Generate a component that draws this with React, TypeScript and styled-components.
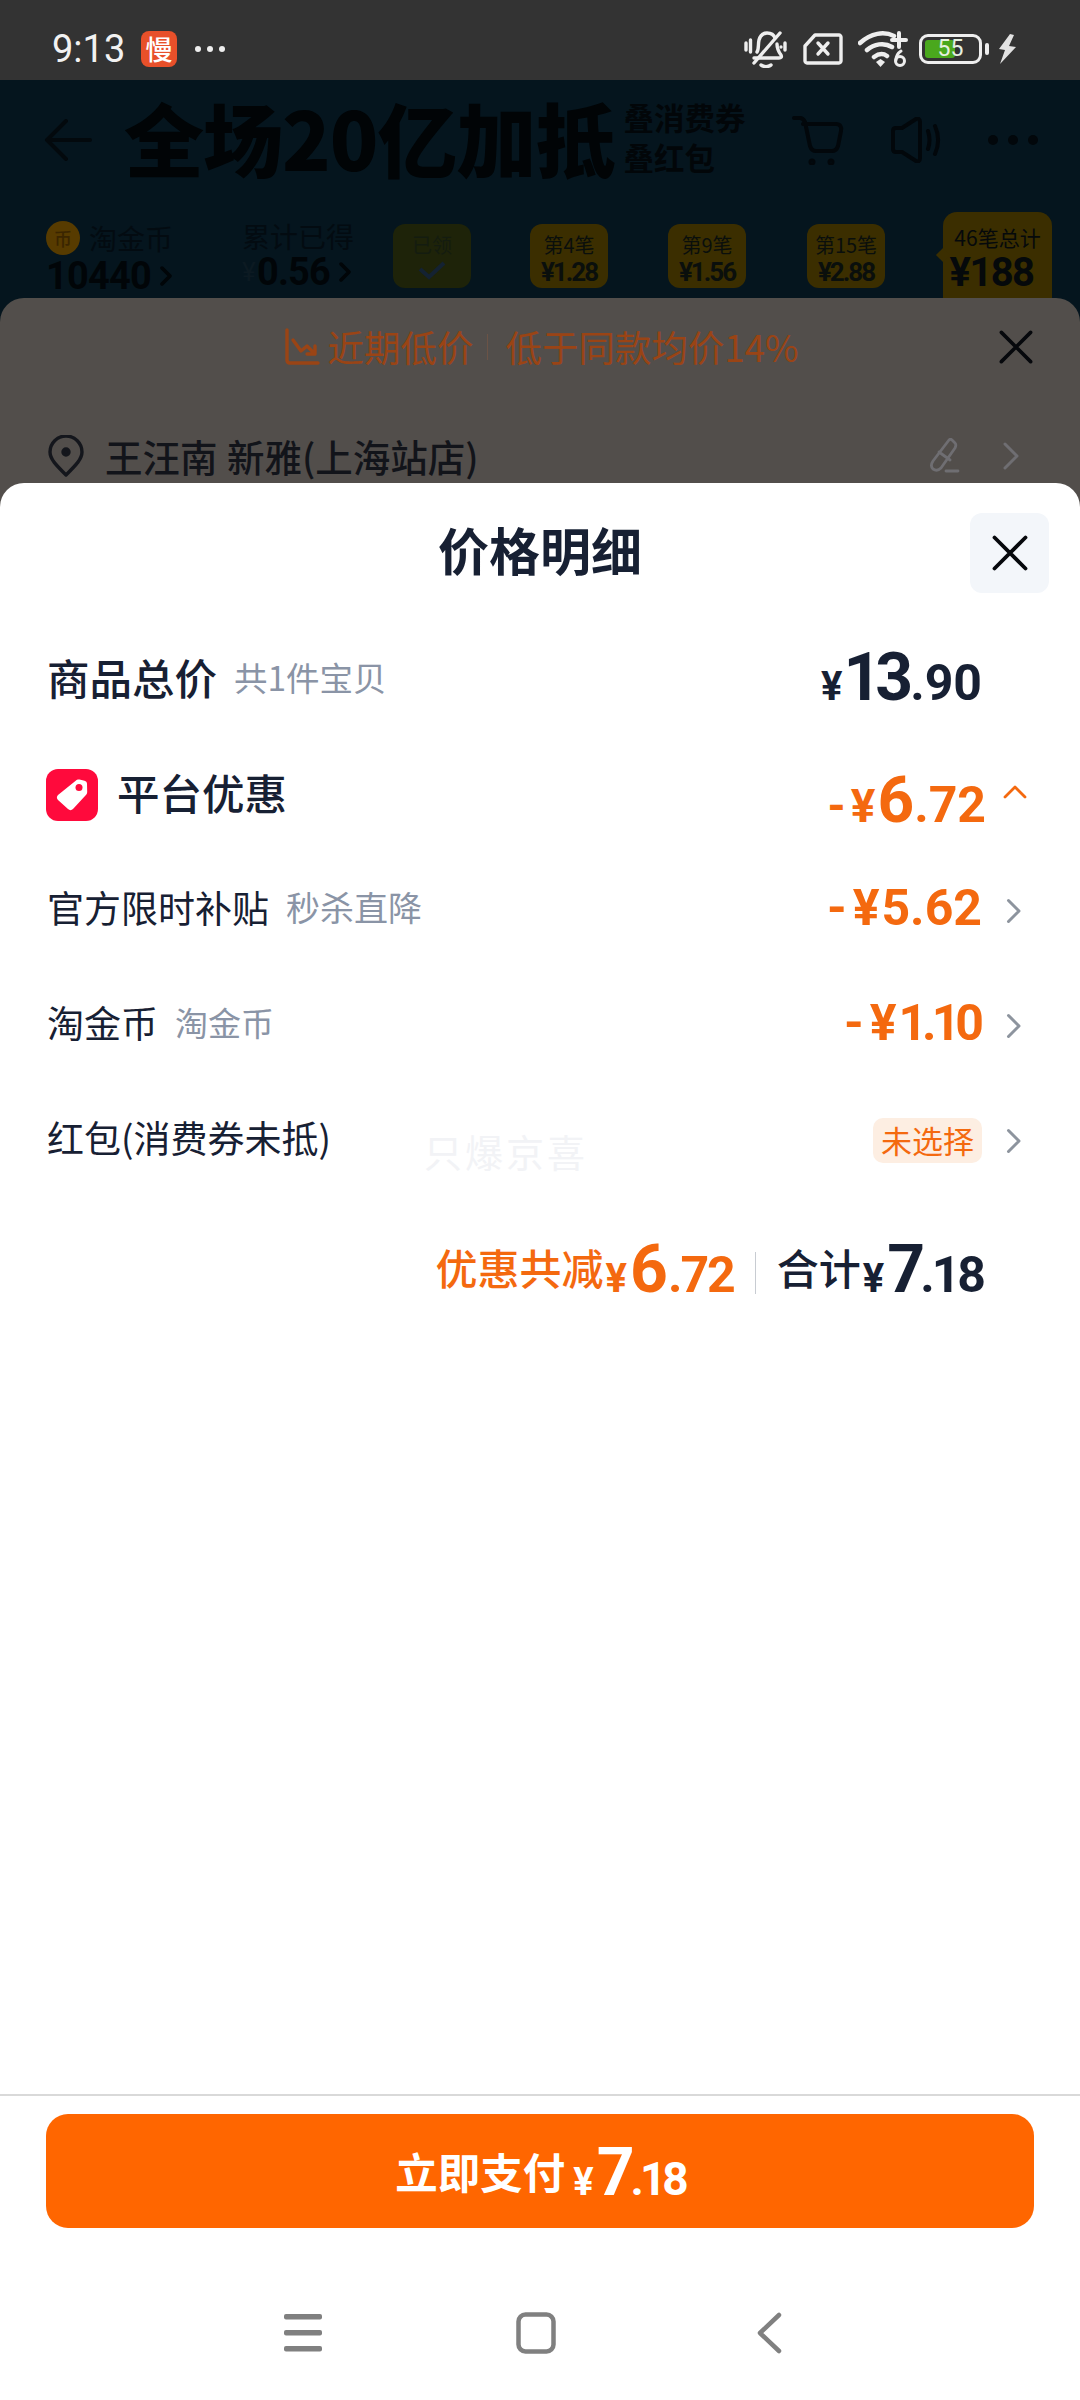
import React from "react";
import styled, { createGlobalStyle } from "styled-components";

const CJK = `"Noto Sans CJK SC", "Noto Sans", sans-serif`;
const NUM = `"Roboto", "Noto Sans CJK SC", sans-serif`;
const INK = "#172033";
const ORANGE = "#f4690f";
const GREY = "#8a94a6";

const Global = createGlobalStyle`
  html, body { margin: 0; padding: 0; background: #fff; }
  * { box-sizing: border-box; }
  body { font-family: ${CJK}; }
`;

const Page = styled.div`
  width: 1080px;
  height: 2400px;
  display: flex;
  flex-direction: column;
  overflow: hidden;
  background: #05151e;
`;

/* status bar */
const StatusBar = styled.div`
  height: 80px;
  flex: none;
  background: #333333;
  display: flex;
  align-items: center;
  padding: 18px 64px 0 52px;
  color: #f2f2f2;
`;
const Clock = styled.span`
  font: 400 38px/1 "Roboto", sans-serif;
  width: 89px;
`;
const AppBadge = styled.span`
  width: 36px;
  height: 36px;
  border-radius: 8px;
  background: #e8502a;
  color: #fff;
  font: 500 27px/36px ${CJK};
  text-align: center;
`;
const StatusDots = styled.span`
  display: flex;
  gap: 6px;
  margin-left: 18px;
  flex: 1;
  i {
    width: 6px;
    height: 6px;
    border-radius: 50%;
    background: #eee;
  }
`;
const StatusIcons = styled.div`
  display: flex;
  align-items: center;
  gap: 15px;
`;
const Battery = styled.span`
  position: relative;
  width: 63px;
  height: 30px;
  display: block;
  flex: none;
  margin-left: -4px;
  margin-right: -5px;
  border: 3px solid #eee;
  border-radius: 9px;
  &::after {
    content: "";
    position: absolute;
    right: -10px;
    top: 6px;
    width: 4px;
    height: 12px;
    border-radius: 2px;
    background: #eee;
  }
`;
const BatteryFill = styled.span`
  position: absolute;
  left: 3px;
  top: 3px;
  bottom: 3px;
  border-radius: 3px;
  background: #4aa81d;
`;
const BatteryLabel = styled.span`
  position: absolute;
  inset: 0;
  text-align: center;
  font: 400 23px/24px "Roboto", sans-serif;
  color: #e6f0e0;
`;
const BoltWrap = styled.span`
  display: flex;
  margin-left: 6px;
`;

/* dimmed page behind sheet */
const Backdrop = styled.div`
  height: 427px;
  flex: none;
  display: flex;
  flex-direction: column;
  background: #05151e;
`;
const TopBar = styled.div`
  height: 118px;
  flex: none;
  display: flex;
  align-items: center;
  padding: 2px 42px 0 44px;
  color: #02070b;
`;
const PromoTitle = styled.span`
  font: 900 80px/1 ${CJK};
  letter-spacing: -1px;
  margin: -8px 0 0 32px;
  white-space: nowrap;
  color: #010406;
`;
const PromoSide = styled.span`
  font: 700 30.5px/40px ${CJK};
  margin: -6px 0 0 9px;
  width: 130px;
  color: #020609;
`;
const TopIcons = styled.div`
  margin-left: auto;
  display: flex;
  align-items: center;
  gap: 46px;
`;
const Strip = styled.div`
  height: 100px;
  flex: none;
  display: flex;
  align-items: flex-start;
  padding-left: 46px;
  position: relative;
`;
const Stat = styled.div<{ $w: number }>`
  width: ${(p) => p.$w}px;
  flex: none;
  padding-top: 23px;
  color: #020a10;
`;
const StatLabel = styled.div`
  display: flex;
  align-items: center;
  gap: 9px;
  font: 400 28px/30px ${CJK};
  color: #030b11;
`;
const Coin = styled.span`
  width: 34px;
  height: 34px;
  border-radius: 50%;
  background: #573b00;
  color: #3a2500;
  font: 500 18px/34px ${CJK};
  text-align: center;
`;
const StatValue = styled.div`
  display: flex;
  align-items: center;
  font: 700 38px/34px ${NUM};
  letter-spacing: -0.8px;
  margin-top: 4px;
  color: #010508;
  small {
    font: 400 26px/34px ${NUM};
    color: #0c1a22;
    margin-right: 2px;
  }
`;
const StatArrow = styled.svg`
  margin-left: 9px;
  flex: none;
`;
const Reward = styled.div<{ $bg: string; $mr: number; $text: string }>`
  width: 78px;
  height: 64px;
  margin-top: 26px;
  margin-right: ${(p) => p.$mr}px;
  flex: none;
  border-radius: 12px;
  background: ${(p) => p.$bg};
  text-align: center;
  color: ${(p) => p.$text};
  font: 400 20px/26px ${CJK};
  padding-top: 8px;
  white-space: nowrap;
  b {
    display: block;
    font: 700 26px/28px ${NUM};
    letter-spacing: -2px;
  }
`;
const RewardCheck = styled.svg`
  display: block;
  margin: 2px auto 0;
`;
const TotalReward = styled.div`
  width: 109px;
  height: 110px;
  margin-top: 14px;
  flex: none;
  border-radius: 14px;
  background: #3b2e00;
  text-align: center;
  color: #05090b;
  font: 400 21px/24px ${CJK};
  padding-top: 13px;
  white-space: nowrap;
  position: relative;
  b {
    display: block;
    font: 700 40px/40px ${NUM};
    letter-spacing: -1.6px;
    margin: 4px 12px 0 0;
  }
  &::before {
    content: "";
    position: absolute;
    left: -5px;
    top: 38px;
    width: 10px;
    height: 10px;
    background: #3b2e00;
    transform: rotate(45deg);
  }
`;
const CardBack = styled.div`
  flex: 1;
  background: #524e4b;
  border-radius: 24px 24px 0 0;
  position: relative;
  z-index: 1;
  padding: 0 47px 0 48px;
`;
const Banner = styled.div`
  height: 98px;
  display: flex;
  align-items: center;
  justify-content: center;
  gap: 7px;
  color: #9a4415;
  font: 400 36.5px/1 ${CJK};
  position: relative;
  padding-left: 2px;
`;
const BannerRule = styled.span`
  width: 1px;
  height: 26px;
  background: #6b5346;
  margin: 0 10px 0 7px;
`;
const BannerClose = styled.span`
  position: absolute;
  right: 0;
  top: 32px;
  display: flex;
`;
const Address = styled.div`
  margin-top: 36px;
  display: flex;
  align-items: center;
  gap: 21px;
  font: 500 37.5px/48px ${CJK};
  word-spacing: 1px;
  color: #12141a;
`;
const AddressTail = styled.div`
  margin-left: auto;
  padding-right: 14px;
  display: flex;
  align-items: center;
  gap: 42px;
`;

/* sheet */
const Sheet = styled.div`
  flex: 1;
  position: relative;
  z-index: 2;
  margin-top: -24px;
  background: #fff;
  border-radius: 24px 24px 0 0;
  display: flex;
  flex-direction: column;
`;
const SheetHead = styled.div`
  height: 140px;
  flex: none;
  position: relative;
  display: flex;
  justify-content: center;
  padding-top: 36px;
`;
const SheetTitle = styled.h1`
  margin: 0;
  font: 700 51px/60px ${CJK};
  color: ${INK};
`;
const CloseBtn = styled.button`
  position: absolute;
  right: 31px;
  top: 30px;
  width: 79px;
  height: 80px;
  border: 0;
  padding: 0;
  border-radius: 12px;
  background: #f3f6fa;
  display: flex;
  align-items: center;
  justify-content: center;
`;
const Rows = styled.div`
  position: relative;
  display: flex;
  flex-direction: column;
`;
const Row = styled.div`
  height: 115px;
  display: flex;
  align-items: center;
  padding: 0 46px 0 47px;
`;
const Name = styled.span<{ $strong?: boolean }>`
  font: ${(p) => (p.$strong ? "500 42.5px" : "400 37px")}/1.2 ${CJK};
  color: ${INK};
  white-space: nowrap;
  margin-bottom: ${(p) => (p.$strong ? 8 : 6)}px;
`;
const Note = styled.span<{ $size?: number; $ml: number }>`
  margin: 0 0 6px ${(p) => p.$ml}px;
  font: 400 ${(p) => p.$size || 33.5}px/1.2 ${CJK};
  color: ${GREY};
  white-space: nowrap;
`;
const TagIcon = styled.span`
  width: 52px;
  height: 52px;
  border-radius: 12px;
  background: #ff0a3c;
  margin: 0 19px 2px -1px;
  display: flex;
  align-items: center;
  justify-content: center;
  flex: none;
`;
const Tail = styled.div`
  margin-left: auto;
  display: flex;
  align-items: center;
`;
const Arrow = styled.span`
  width: 52px;
  flex: none;
  display: flex;
  justify-content: flex-end;
  padding-right: 12px;
`;
const CaretUp = styled.svg`
  margin: -8px -5px 0 0;
`;
const Money = styled.span<{ $color: string; $lift?: number; $nudge?: number }>`
  display: inline-flex;
  align-items: baseline;
  color: ${(p) => p.$color};
  font-family: ${NUM};
  font-weight: 700;
  white-space: nowrap;
  position: relative;
  top: ${(p) => p.$lift || 0}px;
  margin-right: ${(p) => p.$nudge || 0}px;
`;
const Part = styled.span<{ $size: number; $gap?: number; $track?: number }>`
  font-size: ${(p) => p.$size}px;
  line-height: 1;
  margin-left: ${(p) => p.$gap || 0}px;
  letter-spacing: ${(p) => p.$track || 0}px;
`;
const Unselected = styled.span`
  width: 109px;
  height: 45px;
  border-radius: 10px;
  background: #fdeee2;
  color: ${ORANGE};
  font: 400 31px/44px ${CJK};
  text-align: center;
`;
const Watermark = styled.span`
  position: absolute;
  left: 424px;
  top: 505px;
  font: 400 38px/46px ${CJK};
  color: #f2f3f6;
  letter-spacing: 3px;
`;
const Summary = styled.div`
  margin-top: 24px;
  height: 90px;
  display: flex;
  align-items: center;
  justify-content: flex-end;
  padding-right: 97px;
`;
const SumLabel = styled.span<{ $color: string }>`
  font: 500 42px/1 ${CJK};
  color: ${(p) => p.$color};
  white-space: nowrap;
`;
const SumRule = styled.span`
  width: 1px;
  height: 42px;
  background: #c8ccd2;
  margin: 0 21px;
  position: relative;
  top: 6px;
`;
const Footer = styled.div`
  margin-top: auto;
  flex: none;
  border-top: 2px solid #d9d9d9;
  padding: 18px 46px 0;
  height: 306px;
  display: flex;
  flex-direction: column;
`;
const PayBtn = styled.button`
  height: 114px;
  flex: none;
  border: 0;
  padding: 0;
  border-radius: 22px;
  background: #ff6600;
  color: #fff;
  display: flex;
  align-items: center;
  justify-content: center;
  gap: 8px;
  font: 700 42.5px/1 ${CJK};
`;
const NavBar = styled.div`
  margin-top: 84px;
  height: 42px;
  display: flex;
  align-items: center;
  padding-left: 238px;
  gap: 194px;
`;
const NavBack = styled.svg`
  margin-left: 6px;
`;

const Chevron = () => (
  <svg width="16" height="26" viewBox="0 0 16 26" fill="none" stroke="#8d949e" strokeWidth="3" strokeLinecap="round" strokeLinejoin="round">
    <path d="M2.5 2.5 13 13 2.5 23.5" />
  </svg>
);

const X = ({ size = 36, color = "#06080c" }: { size?: number; color?: string }) => (
  <svg width={size} height={size} viewBox="0 0 36 36" fill="none" stroke={color} strokeWidth="3.8" strokeLinecap="round">
    <path d="M2.5 2.5 33.5 33.5M33.5 2.5 2.5 33.5" />
  </svg>
);

const Caret = () => (
  <StatArrow width="12" height="22" viewBox="0 0 12 22" fill="none" stroke="#010508" strokeWidth="3.500" strokeLinecap="round" strokeLinejoin="round">
    <path d="M2 3l8 8-8 8" />
  </StatArrow>
);

export default function App() {
  return (
    <Page>
      <Global />
      <StatusBar>
        <Clock>9:13</Clock>
        <AppBadge>慢</AppBadge>
        <StatusDots>
          <i />
          <i />
          <i />
        </StatusDots>
        <StatusIcons>
          <svg width="44" height="38" viewBox="0 0 44 38" fill="none" stroke="#eee" strokeWidth="3.4" strokeLinecap="round" strokeLinejoin="round">
            <path d="M13 22c2-3 1-8 2-12 1-4 4-7 8-7s7 2 8 5M33 14c0 4 1 7 4 11 1 2 0 3-2 3H10" />
            <path d="M36 3 10 33M2 13v7M6.500 10v12M41 13v7M37 17v0" />
            <path d="M17 35c3 2 7 2 10 0" />
          </svg>
          <svg width="40" height="32" viewBox="0 0 40 32" fill="none" stroke="#eee" strokeWidth="3.400" strokeLinecap="round" strokeLinejoin="round">
            <path d="M2 13 12 2h24c1 0 2 1 2 2v24c0 1-1 2-2 2H4c-1 0-2-1-2-2Z" />
            <path d="M15 10l10 11M25 10 15 21" />
          </svg>
          <svg width="50" height="38" viewBox="0 0 50 38" fill="none">
            <path d="M2 13c11-10 24-12 34-7M9 20c7-6 17-8 25-3M16 27c4-3 9-4 13-1" stroke="#eee" strokeWidth="4.500" strokeLinecap="round" />
            <path d="M22.500 37 18 32l4.500-3 4.500 3Z" fill="#eee" />
            <path d="M41 3v14M34 10h14" stroke="#eee" strokeWidth="4" strokeLinecap="round" />
            <circle cx="42" cy="31" r="4.500" stroke="#eee" strokeWidth="3" />
            <path d="M38 30c0-4 2-7 5-9" stroke="#eee" strokeWidth="3" strokeLinecap="round" />
          </svg>
          <Battery>
            <BatteryFill style={{ width: "53%" }} />
            <BatteryLabel>55</BatteryLabel>
          </Battery>
          <BoltWrap>
            <svg width="18" height="30" viewBox="0 0 18 30" fill="#e2e2e2">
              <path d="M12 0 1 15l6 1-5 14 16-17-7-1 5-11Z" />
            </svg>
          </BoltWrap>
        </StatusIcons>
      </StatusBar>

      <Backdrop>
        <TopBar>
          <svg width="48" height="42" viewBox="0 0 48 42" fill="none" stroke="#03090d" strokeWidth="4" strokeLinecap="round" strokeLinejoin="round">
            <path d="M46 21H3M22 2 3 21l19 19" />
          </svg>
          <PromoTitle>全场20亿加抵</PromoTitle>
          <PromoSide>
            叠消费券
            <br />
            叠红包
          </PromoSide>
          <TopIcons>
            <svg width="52" height="50" viewBox="0 0 52 50" fill="none" stroke="#02070b" strokeWidth="4" strokeLinecap="round" strokeLinejoin="round">
              <path d="M2 3h6c3 0 4 2 5 4l5 24c1 3 3 5 6 5h16c3 0 5-2 6-5l3-15c1-4-1-7-5-7H11" />
              <circle cx="20" cy="47" r="1.500" />
              <circle cx="39" cy="47" r="1.500" />
            </svg>
            <svg width="52" height="46" viewBox="0 0 52 46" fill="none" stroke="#02070b" strokeWidth="4" strokeLinecap="round" strokeLinejoin="round">
              <path d="M3 14c0-2 1-3 3-3h6L26 2c2-1 4 0 4 3v36c0 3-2 4-4 3L12 35H6c-2 0-3-1-3-3Z" />
              <path d="M38 14c2 6 2 12 0 18M45 9c4 9 4 19 0 28" />
            </svg>
            <svg width="50" height="12" viewBox="0 0 50 12" fill="#02070b">
              <circle cx="5" cy="6" r="5" />
              <circle cx="25" cy="6" r="5" />
              <circle cx="45" cy="6" r="5" />
            </svg>
          </TopIcons>
        </TopBar>
        <Strip>
          <Stat $w={196}>
            <StatLabel>
              <Coin>币</Coin>
              淘金币
            </StatLabel>
            <StatValue>
              10440
              <Caret />
            </StatValue>
          </Stat>
          <Stat $w={151}>
            <StatLabel>累计已得</StatLabel>
            <StatValue>
              <small>¥</small>0.56
              <Caret />
            </StatValue>
          </Stat>
          <Reward $bg="#1e2309" $mr={59} $text="#141c10">
            已领
            <RewardCheck width="30" height="22" viewBox="0 0 30 22" fill="none" stroke="#142232" strokeWidth="4">
              <path d="M3 9l9 8L27 3" />
            </RewardCheck>
          </Reward>
          <Reward $bg="#3b2e00" $mr={60} $text="#0a0f0c">
            第4笔<b>¥1.28</b>
          </Reward>
          <Reward $bg="#3b2e00" $mr={61} $text="#0a0f0c">
            第9笔<b>¥1.56</b>
          </Reward>
          <Reward $bg="#3b2e00" $mr={58} $text="#0a0f0c">
            第15笔<b>¥2.88</b>
          </Reward>
          <TotalReward>
            46笔总计<b>¥188</b>
          </TotalReward>
        </Strip>
        <CardBack>
          <Banner>
            <svg width="36" height="38" viewBox="0 0 36 38" fill="none" stroke="#9a4415" strokeWidth="3.400" strokeLinecap="round" strokeLinejoin="round">
              <path d="M3 2v30c0 2 1 3 3 3h28M9 12l8 11 6-5 8 8M31 18v8h-8" />
            </svg>
            近期低价
            <BannerRule />
            低于同款均价14%
            <BannerClose>
              <X size={34} />
            </BannerClose>
          </Banner>
          <Address>
            <svg width="36" height="42" viewBox="0 0 36 42" fill="none" stroke="#14161c" strokeWidth="3.400" strokeLinejoin="round">
              <path d="M18 40C8 30 2 24 2 17a16 16 0 0 1 32 0c0 7-6 13-16 23Z" />
              <circle cx="18" cy="17" r="3" fill="#14161c" />
            </svg>
            王汪南 新雅(上海站店)
            <AddressTail>
              <svg width="32" height="36" viewBox="0 0 32 36" fill="none" stroke="#6f6e72" strokeWidth="2.800" strokeLinejoin="round" strokeLinecap="round">
                <path d="M20 2 4 23c-2 3-2 6 0 8 3 2 6 1 8-1L26 10c1-2 1-4 0-5l-3-3c-1-1-2-1-3 0ZM10 14l11 8M17 33h12" />
              </svg>
              <svg width="16" height="28" viewBox="0 0 16 28" fill="none" stroke="#6f6e72" strokeWidth="3" strokeLinecap="round" strokeLinejoin="round">
                <path d="M2 2l12 12L2 26" />
              </svg>
            </AddressTail>
          </Address>
        </CardBack>
      </Backdrop>

      <Sheet>
        <SheetHead>
          <SheetTitle>价格明细</SheetTitle>
          <CloseBtn aria-label="关闭">
            <X />
          </CloseBtn>
        </SheetHead>
        <Rows>
          <Row>
            <Name $strong>商品总价</Name>
            <Note $ml={17}>共1件宝贝</Note>
            <Tail>
              <Money $color={INK} $lift={-3}>
                <Part $size={40}>¥</Part>
                <Part $size={66} $gap={1} $track={-6}>13</Part>
                <Part $size={50} $gap={3}>.90</Part>
              </Money>
              <Arrow />
            </Tail>
          </Row>
          <Row>
            <TagIcon>
              <svg width="32" height="34" viewBox="0 0 32 34">
                <path d="M20 2.500c1-1 2-1.200 3.500-1l5 1.200c1.500.3 2.500 1.500 2.500 3l.2 8c0 1.500-.5 2.500-1.500 3.500L17 31c-1.500 1.500-3.500 1.500-5 0L2 22c-1.500-1.500-1.500-3.500 0-5Z" fill="#fff" />
                <circle cx="23" cy="9.500" r="3.500" fill="#ff0a3c" />
              </svg>
            </TagIcon>
            <Name $strong>平台优惠</Name>
            <Tail>
              <Money $color={ORANGE} $lift={5} $nudge={-4}>
                <Part $size={46}>-</Part>
                <Part $size={46} $gap={5}>¥</Part>
                <Part $size={64} $gap={2}>6</Part>
                <Part $size={50}>.72</Part>
              </Money>
              <Arrow>
                <CaretUp width="24" height="14" viewBox="0 0 24 14" fill="none" stroke={ORANGE} strokeWidth="2.800" strokeLinecap="round" strokeLinejoin="round">
                  <path d="M2 12 12 2l10 10" />
                </CaretUp>
              </Arrow>
            </Tail>
          </Row>
          <Row>
            <Name>官方限时补贴</Name>
            <Note $size={34} $ml={17}>秒杀直降</Note>
            <Tail>
              <Money $color={ORANGE} $lift={-3}>
                <Part $size={50}>-</Part>
                <Part $size={50} $gap={6}>¥</Part>
                <Part $size={50} $gap={2}>5.62</Part>
              </Money>
              <Arrow>
                <Chevron />
              </Arrow>
            </Tail>
          </Row>
          <Row>
            <Name>淘金币</Name>
            <Note $size={33} $ml={17}>淘金币</Note>
            <Tail>
              <Money $color={ORANGE} $lift={-3} $nudge={3}>
                <Part $size={50}>-</Part>
                <Part $size={50} $gap={6}>¥</Part>
                <Part $size={50} $gap={2} $track={-5}>1.10</Part>
              </Money>
              <Arrow>
                <Chevron />
              </Arrow>
            </Tail>
          </Row>
          <Row>
            <Name>红包(消费券未抵)</Name>
            <Tail>
              <Unselected>未选择</Unselected>
              <Arrow>
                <Chevron />
              </Arrow>
            </Tail>
          </Row>
          <Watermark>只爆京喜</Watermark>
        </Rows>
        <Summary>
          <SumLabel $color={ORANGE}>优惠共减</SumLabel>
          <Money $color={ORANGE} $lift={3}>
            <Part $size={40} $gap={2}>¥</Part>
            <Part $size={66} $gap={3}>6</Part>
            <Part $size={50} $track={-2}>.72</Part>
          </Money>
          <SumRule />
          <SumLabel $color={INK}>合计</SumLabel>
          <Money $color={INK} $lift={3}>
            <Part $size={40} $gap={2}>¥</Part>
            <Part $size={66} $gap={3} $track={-5}>7</Part>
            <Part $size={50} $track={-3}>.18</Part>
          </Money>
        </Summary>
        <Footer>
          <PayBtn>
            立即支付
            <Money $color="#fff" $lift={2}>
              <Part $size={38}>¥</Part>
              <Part $size={66} $gap={3} $track={-4}>7</Part>
              <Part $size={46} $track={-4}>.18</Part>
            </Money>
          </PayBtn>
          <NavBar>
            <svg width="38" height="38" viewBox="0 0 38 38" fill="#808080">
              <rect y="0" width="38" height="5.500" rx="2" />
              <rect y="16" width="38" height="5.500" rx="2" />
              <rect y="32" width="38" height="5.500" rx="2" />
            </svg>
            <svg width="40" height="42" viewBox="0 0 40 42" fill="none" stroke="#808080" strokeWidth="4.500">
              <rect x="2.500" y="2.500" width="35" height="37" rx="7" />
            </svg>
            <NavBack width="26" height="42" viewBox="0 0 26 42" fill="none" stroke="#808080" strokeWidth="4.500" strokeLinecap="round" strokeLinejoin="round">
              <path d="M23 3 4 21l19 18" />
            </NavBack>
          </NavBar>
        </Footer>
      </Sheet>
    </Page>
  );
}
